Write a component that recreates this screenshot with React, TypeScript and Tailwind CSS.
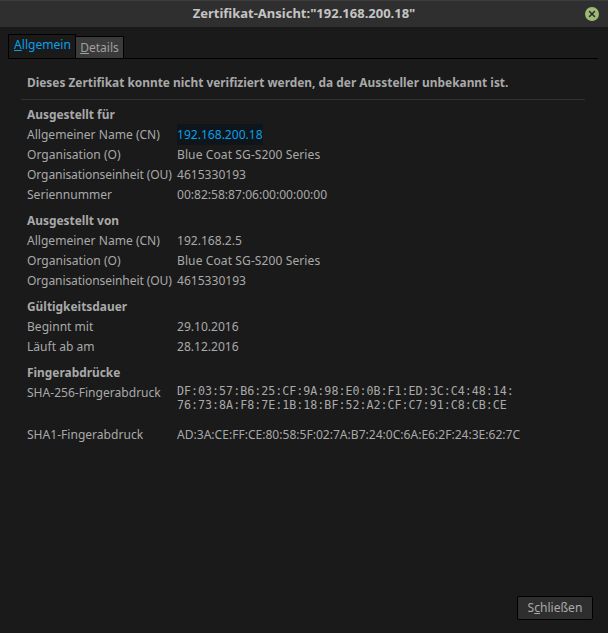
import { X } from 'lucide-react'

type Row = { label: string; value: string; link?: boolean }

const SECTIONS: { title: string; rows: Row[] }[] = [
  {
    title: 'Ausgestellt für',
    rows: [
      { label: 'Allgemeiner Name (CN)', value: '192.168.200.18', link: true },
      { label: 'Organisation (O)', value: 'Blue Coat SG-S200 Series' },
      { label: 'Organisationseinheit (OU)', value: '4615330193' },
      { label: 'Seriennummer', value: '00:82:58:87:06:00:00:00:00' },
    ],
  },
  {
    title: 'Ausgestellt von',
    rows: [
      { label: 'Allgemeiner Name (CN)', value: '192.168.2.5' },
      { label: 'Organisation (O)', value: 'Blue Coat SG-S200 Series' },
      { label: 'Organisationseinheit (OU)', value: '4615330193' },
    ],
  },
  {
    title: 'Gültigkeitsdauer',
    rows: [
      { label: 'Beginnt mit', value: '29.10.2016' },
      { label: 'Läuft ab am', value: '28.12.2016' },
    ],
  },
]

export default function App() {
  return (
    <div className="flex h-[633px] w-[608px] flex-col overflow-hidden bg-[#1a1a1a] font-['Noto_Sans',sans-serif] text-[12.07px] text-[#a9a9a9]">
      <div className="flex h-[27px] shrink-0 items-center border-t border-[#3d3d3d] bg-[#2f2f2f] pl-[23px] pr-[9px]">
        <div className="flex-1 text-center text-[13px] font-bold text-[#c4c4c4]">Zertifikat-Ansicht:"192.168.200.18"</div>
        <div className="flex h-[14px] w-[14px] items-center justify-center rounded-full bg-[#9dbb76] text-[#2b2b2b]">
          <X size={10} strokeWidth={3.5} />
        </div>
      </div>

      <div className="flex flex-1 flex-col pb-[13px] pl-2 pr-[10px] pt-2">
        <div className="flex h-[24px] items-end border-b border-black">
          <div className="flex h-[24px] w-[68px] items-center justify-center border border-b-0 border-black bg-[#1a1a1a] pb-[3px] pl-px text-[#0a9fe6]">
            <span><span className="underline">A</span>llgemein</span>
          </div>
          <div className="flex h-[22px] w-[48px] items-center justify-center border border-b-0 border-l-0 border-black bg-[#3a3a3a] pt-px text-[#a0a0a0]">
            <span><span className="underline">D</span>etails</span>
          </div>
        </div>

        <div className="flex flex-1 flex-col pl-[13px] pr-[13px]">
          <div className="flex h-[41px] items-center border-b border-[#333333] pl-[6px] pt-[7px] text-[11.9px] font-bold text-[#a9a9a9]">
            Dieses Zertifikat konnte nicht verifiziert werden, da der Aussteller unbekannt ist.
          </div>

          <div className="mt-[5px] flex flex-col gap-[6px] pl-[6px]">
            {SECTIONS.map((section) => (
              <section key={section.title}>
                <h2 className="flex h-5 items-center text-[11.9px] font-bold">{section.title}</h2>
                {section.rows.map((row) => (
                  <div key={section.title + row.label} className="grid h-5 grid-cols-[150px_1fr] items-center">
                    <span className={row.label.startsWith('Organisationseinheit') ? 'tracking-[-0.1px]' : ''}>{row.label}</span>
                    <span className={row.value.startsWith('Blue') ? 'tracking-[0.08px]' : ''}>
                      <span className={row.link ? 'bg-[#0e151b] py-[2px] text-[#0a9fe6]' : ''}>{row.value}</span>
                    </span>
                  </div>
                ))}
              </section>
            ))}

            <section>
              <h2 className="flex h-5 items-center text-[11.9px] font-bold">Fingerabdrücke</h2>
              <div className="grid grid-cols-[150px_1fr]">
                <span className="leading-5">SHA-256-Fingerabdruck</span>
                <span className="pt-px font-['DejaVu_Sans_Mono',monospace] text-[11.67px] leading-[14px]">
                  DF:03:57:B6:25:CF:9A:98:E0:0B:F1:ED:3C:C4:48:14:
                  <br />
                  76:73:8A:F8:7E:1B:18:BF:52:A2:CF:C7:91:C8:CB:CE
                </span>
              </div>
              <div className="mt-[13px] grid h-5 grid-cols-[150px_1fr] items-center">
                <span>SHA1-Fingerabdruck</span>
                <span>AD:3A:CE:FF:CE:80:58:5F:02:7A:B7:24:0C:6A:E6:2F:24:3E:62:7C</span>
              </div>
            </section>
          </div>
        </div>

        <div className="flex justify-end pr-[5px]">
          <button className="flex h-[24px] w-[76px] items-center justify-center rounded-[2px] border border-black bg-[#2e2e2e] text-[#a9a9a9]">
            <span>S<span className="underline">c</span>hließen</span>
          </button>
        </div>
      </div>
    </div>
  )
}
